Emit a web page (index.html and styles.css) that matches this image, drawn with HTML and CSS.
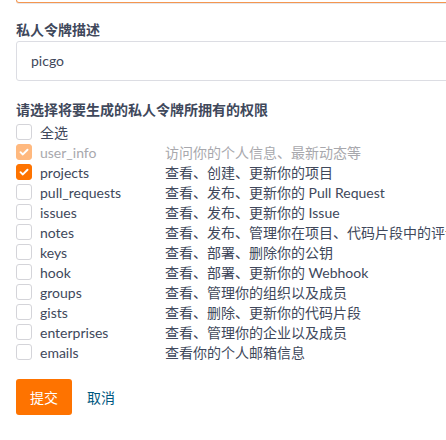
FILE: index.html
```html
<!DOCTYPE html>
<html lang="zh-CN">
<head>
<meta charset="utf-8">
<link rel="stylesheet" href="styles.css">
</head>
<body>
<div class="page">
  <div class="prev-input"></div>
  <div class="field">
    <div class="field-label">私人令牌描述</div>
    <div class="text-input">picgo</div>
  </div>
  <div class="field perms">
    <div class="field-label">请选择将要生成的私人令牌所拥有的权限</div>
    <ul class="perm-list">
      <li class="perm"><span class="cb"></span><span class="name">全选</span></li>
      <li class="perm disabled"><span class="cb checked"><svg viewBox="0 0 16 16"><path d="M4 8.2l2.7 2.6L12 5.4"/></svg></span><span class="name">user_info</span><span class="desc">访问你的个人信息、最新动态等</span></li>
      <li class="perm"><span class="cb checked"><svg viewBox="0 0 16 16"><path d="M4 8.2l2.7 2.6L12 5.4"/></svg></span><span class="name">projects</span><span class="desc">查看、创建、更新你的项目</span></li>
      <li class="perm"><span class="cb"></span><span class="name">pull_requests</span><span class="desc">查看、发布、更新你的 Pull Request</span></li>
      <li class="perm"><span class="cb"></span><span class="name">issues</span><span class="desc">查看、发布、更新你的 Issue</span></li>
      <li class="perm"><span class="cb"></span><span class="name">notes</span><span class="desc">查看、发布、管理你在项目、代码片段中的评论</span></li>
      <li class="perm"><span class="cb"></span><span class="name">keys</span><span class="desc">查看、部署、删除你的公钥</span></li>
      <li class="perm"><span class="cb"></span><span class="name">hook</span><span class="desc">查看、部署、更新你的 Webhook</span></li>
      <li class="perm"><span class="cb"></span><span class="name">groups</span><span class="desc">查看、管理你的组织以及成员</span></li>
      <li class="perm"><span class="cb"></span><span class="name">gists</span><span class="desc">查看、删除、更新你的代码片段</span></li>
      <li class="perm"><span class="cb"></span><span class="name">enterprises</span><span class="desc">查看、管理你的企业以及成员</span></li>
      <li class="perm"><span class="cb"></span><span class="name">emails</span><span class="desc">查看你的个人邮箱信息</span></li>
    </ul>
  </div>
  <div class="actions">
    <button class="btn-submit">提交</button>
    <a class="btn-cancel" href="#">取消</a>
  </div>
</div>
</body>
</html>
```
FILE: styles.css
```css
html, body {
  margin: 0;
  padding: 0;
  overflow: hidden;
  background: #fff;
}
body {
  font-family: "Noto Sans CJK SC", "Noto Sans", sans-serif;
  font-size: 14px;
  color: #40485b;
}
.page {
  width: 600px;
  padding: 0 16px;
  display: flex;
  flex-direction: column;
}
.prev-input {
  height: 2px;
  border: 1px solid #f4964f;
  border-top: 0;
  border-radius: 0 0 3px 3px;
  box-shadow: 0 1px 0 #e6e6ea;
}
.field {
  display: flex;
  flex-direction: column;
}
.field-label {
  font-weight: bold;
  line-height: 20px;
  margin-top: 16px;
  margin-bottom: 2px;
}
.text-input {
  height: 38px;
  border: 1px solid #dcdde3;
  border-radius: 3px;
  padding: 0 14px;
  line-height: 38px;
  color: #40485b;
  font-family: "Lato", "Noto Sans CJK SC", sans-serif;
}
.perms .field-label {
  margin-top: 18px;
  margin-bottom: 3px;
}
.perm-list {
  list-style: none;
  margin: 0;
  padding: 0;
}
.perm {
  display: flex;
  align-items: center;
  height: 20px;
  white-space: nowrap;
}
.cb {
  box-sizing: border-box;
  width: 16px;
  height: 16px;
  border: 1px solid #d4d4d9;
  border-radius: 3px;
  background: #fff;
  flex: none;
  display: flex;
}
.cb.checked {
  background: #fe7300;
  border-color: #fe7300;
}
.cb svg {
  width: 14px;
  height: 14px;
  fill: none;
  stroke: #fff;
  stroke-width: 2.2;
  stroke-linecap: round;
  stroke-linejoin: round;
}
.disabled .cb.checked {
  background: #ffb97f;
  border-color: #ffb97f;
}
.name {
  margin-left: 8px;
  width: 125px;
  flex: none;
  font-family: "Lato", "Noto Sans CJK SC", sans-serif;
}
.disabled .name,
.disabled .desc {
  color: #a8a8ad;
}
.desc {
  color: #40485b;
  font-family: "Lato", "Noto Sans CJK SC", sans-serif;
}
.actions {
  display: flex;
  align-items: center;
  margin-top: 17px;
}
.btn-submit {
  width: 56px;
  height: 36px;
  border: 0;
  border-radius: 3px;
  background: #fe7300;
  color: #fff;
  font-family: inherit;
  font-size: 14px;
  padding: 0;
}
.btn-cancel {
  margin-left: 15px;
  color: #005980;
  text-decoration: none;
}
```
